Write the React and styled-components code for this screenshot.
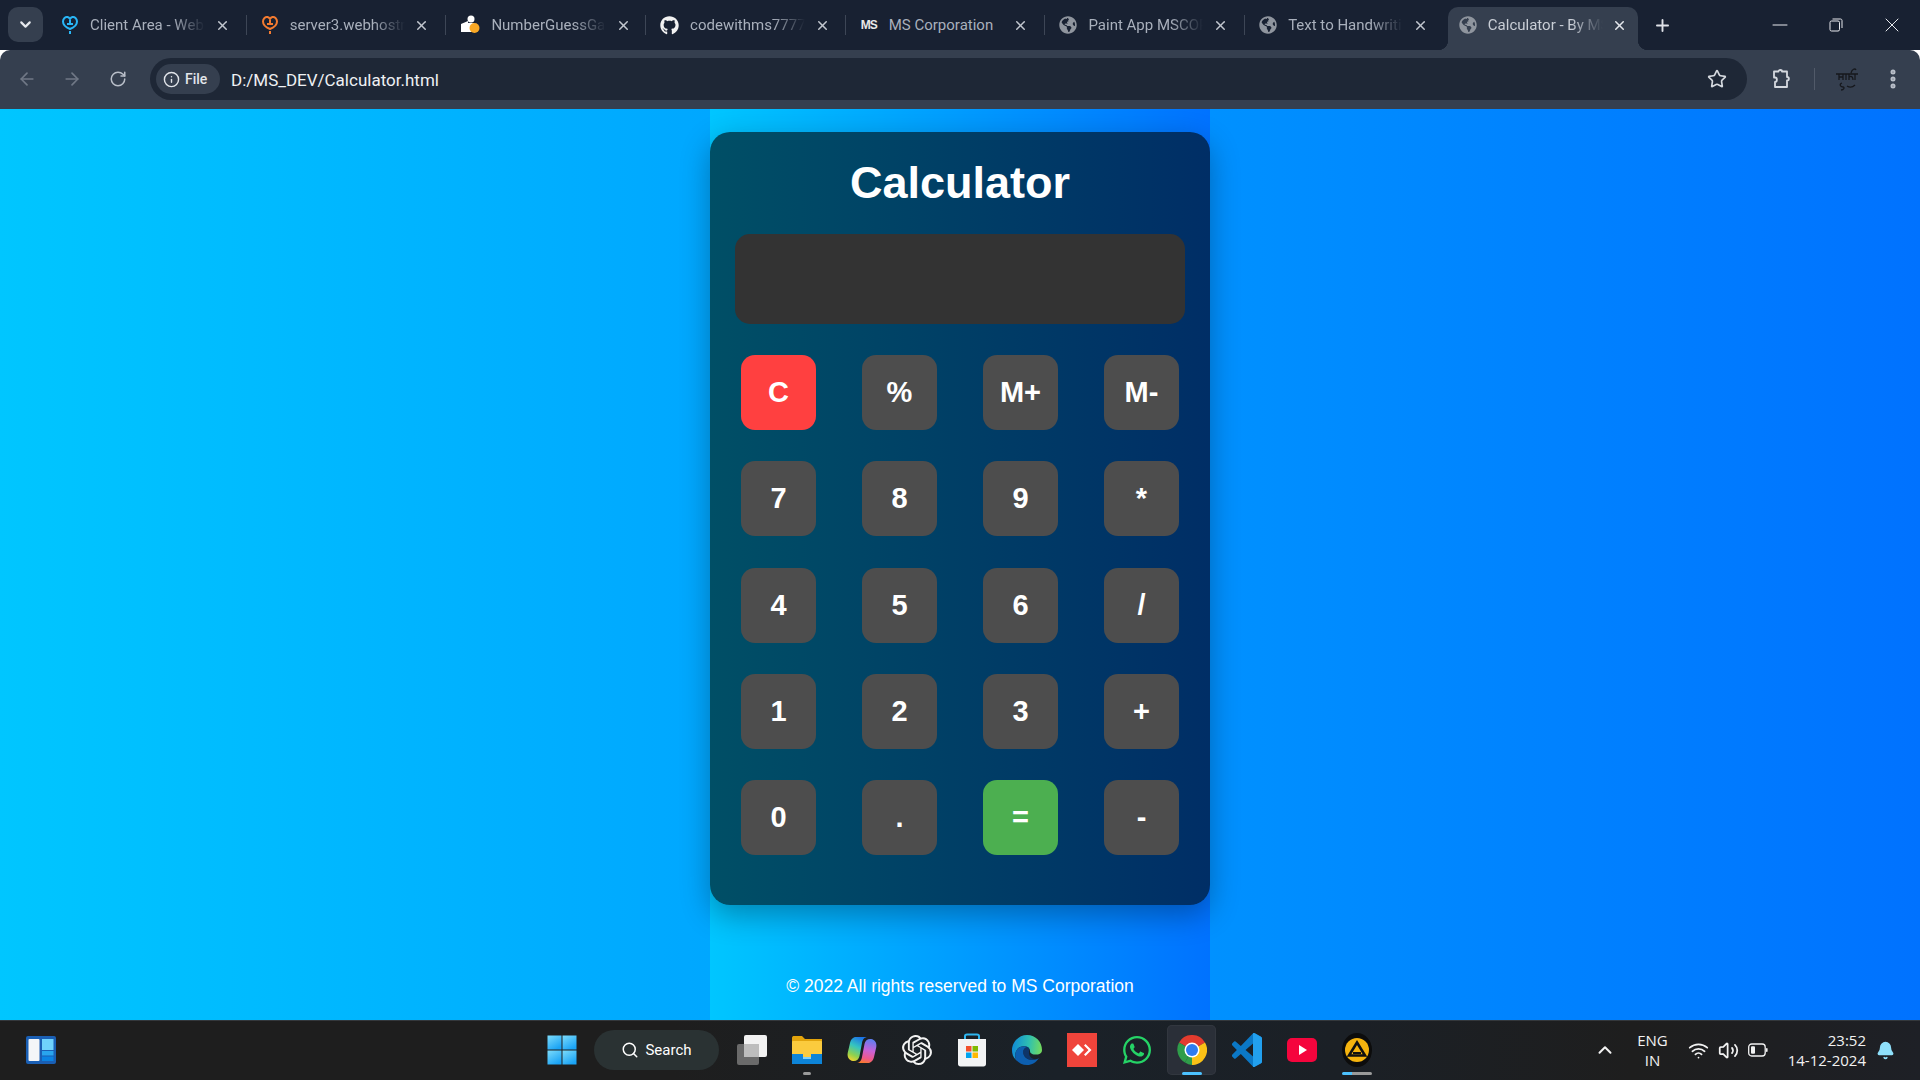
import React from 'react';
import styled, { createGlobalStyle } from 'styled-components';
import {
  ArrowLeft, ArrowRight, RotateCw, Info, Star, X, Plus, Minus, ChevronDown, ChevronUp,
  Wifi, Volume2, Search, MoreVertical, Bell,
} from 'lucide-react';
import { FaGithub, FaGlobeAmericas, FaWhatsapp } from 'react-icons/fa';
import { SiOpenai } from 'react-icons/si';

const GlobalStyle = createGlobalStyle`
  * { box-sizing: border-box; }
  html, body { margin: 0; padding: 0; height: 100%; overflow: hidden; }
  body { font-family: "Liberation Sans", Arial, sans-serif; }
`;

const Screen = styled.div`
  width: 1920px;
  height: 1080px;
  display: flex;
  flex-direction: column;
`;

/* browser chrome */
const TabStrip = styled.div`
  flex: 0 0 50px;
  display: flex;
  align-items: flex-end;
  background: #182132;
  position: relative;
`;

const TabSearch = styled.div`
  flex: 0 0 35px;
  height: 35px;
  margin: 0 5px 8px 8px;
  border-radius: 10px;
  background: #353f4f;
  color: #e6e9ee;
  display: flex;
  align-items: center;
  justify-content: center;
`;

const Tab = styled.div`
  flex: 0 0 199.7px;
  height: 43px;
  padding: 0 0 7px 13px;
  display: flex;
  align-items: center;
  position: relative;
  color: #a9b0bc;

  ${(p) => !p.$last && !p.$active && `
    &::after {
      content: '';
      position: absolute;
      right: 1px;
      top: 8px;
      width: 1px;
      height: 20px;
      background: #3d4656;
    }
  `}
`;

const ActiveTabShape = styled.div`
  position: absolute;
  left: 2px;
  top: 0;
  bottom: 0;
  width: 190px;
  background: #353f4f;
  border-radius: 10px 10px 0 0;

  &::before, &::after {
    content: '';
    position: absolute;
    bottom: 0;
    width: 10px;
    height: 10px;
  }
  &::before {
    left: -10px;
    background: radial-gradient(circle at 0 0, transparent 10px, #353f4f 10.5px);
  }
  &::after {
    right: -10px;
    background: radial-gradient(circle at 100% 0, transparent 10px, #353f4f 10.5px);
  }
`;

const Favicon = styled.span`
  flex: 0 0 18px;
  height: 18px;
  display: flex;
  align-items: center;
  justify-content: center;
  position: relative;
  color: ${(p) => p.$color || '#8f959e'};
`;

const MsMark = styled.span`
  font: 700 12px/18px "Liberation Sans Narrow", "Liberation Sans", sans-serif;
  letter-spacing: -1px;
  color: #e8e8e8;
`;

const TabTitle = styled.span`
  flex: 0 0 115px;
  margin-left: 11px;
  font: 400 15px/20px Roboto, sans-serif;
  white-space: nowrap;
  overflow: hidden;
  position: relative;
  color: ${(p) => (p.$active ? '#c9ced6' : '#a9b0bc')};
  ${(p) => p.$fade && `
    -webkit-mask-image: linear-gradient(90deg, #000 72%, transparent 100%);
    mask-image: linear-gradient(90deg, #000 72%, transparent 100%);
  `}
`;

const TabClose = styled.span`
  flex: 0 0 16px;
  margin-left: 9px;
  display: flex;
  position: relative;
  justify-content: center;
  color: ${(p) => (p.$active ? '#e4e7ec' : '#c2c7cf')};
`;

const NewTab = styled.div`
  margin: 0 0 8px 0;
  width: 34px;
  height: 34px;
  display: flex;
  align-items: center;
  justify-content: center;
  color: #dfe2e8;
`;

const WindowButtons = styled.div`
  margin-left: auto;
  height: 50px;
  display: flex;
  color: #e8eaee;
`;

const WindowButton = styled.div`
  width: 56px;
  height: 50px;
  display: flex;
  align-items: center;
  justify-content: center;
`;

const Toolbar = styled.div`
  flex: 0 0 59px;
  display: flex;
  align-items: flex-start;
  padding-top: 8px;
  background: #353f4f;
  border-radius: 10px 10px 0 0;
`;

const NavButton = styled.div`
  flex: 0 0 ${(p) => p.$w || 45}px;
  height: 42px;
  display: flex;
  align-items: center;
  justify-content: center;
  color: ${(p) => (p.$dim ? '#707886' : '#b9bfc9')};
`;

const AddressBar = styled.div`
  flex: 0 0 1597px;
  height: 42px;
  margin-left: 4px;
  padding: 0 12px 0 6px;
  border-radius: 21px;
  background: #1e2736;
  display: flex;
  align-items: center;
`;

const FileChip = styled.div`
  flex: 0 0 64px;
  height: 30px;
  border-radius: 15px;
  background: #353f4f;
  padding-left: 7px;
  display: flex;
  align-items: center;
  gap: 5px;
  color: #e2e5ea;
  font: 500 14px/30px Roboto, sans-serif;
`;

const UrlText = styled.span`
  margin-left: 11px;
  padding-top: 1px;
  font: 400 17px/20px Roboto, sans-serif;
  color: #eef0f3;
`;

const StarButton = styled.div`
  margin-left: auto;
  margin-right: 8px;
  display: flex;
  color: #d5d9df;
`;

const ToolbarDivider = styled.div`
  flex: 0 0 1px;
  height: 22px;
  margin: 10px 12px 0 -1px;
  background: #515a69;
`;

/* calculator page */
const Page = styled.main`
  flex: 1;
  display: flex;
  justify-content: center;
  background: linear-gradient(to right, #00c6ff, #0072ff);
`;

const Column = styled.div`
  width: 500px;
  padding-top: 23px;
  display: flex;
  flex-direction: column;
  background: linear-gradient(to right, #00c6ff, #0072ff);
`;

const Calculator = styled.section`
  height: 773px;
  padding: 0 25px;
  border-radius: 20px;
  background: linear-gradient(to right, #004f66, #002e66);
  box-shadow: 0 10px 30px rgba(0, 0, 0, 0.3);
`;

const Title = styled.h1`
  margin: 0;
  height: 102px;
  font-size: 45px;
  font-weight: 700;
  line-height: 102px;
  text-align: center;
  color: #fff;
`;

const Display = styled.div`
  height: 90px;
  border-radius: 15px;
  background: #333;
`;

const Keys = styled.div`
  margin-top: 31px;
  padding: 0 6px;
  display: grid;
  grid-template-columns: repeat(4, 75px);
  grid-auto-rows: 75px;
  column-gap: 46px;
  row-gap: 31.25px;
`;

const Key = styled.button`
  border: 0;
  padding: 0;
  border-radius: 14px;
  font: 700 29px "Liberation Sans", Arial, sans-serif;
  color: #fff;
  background: ${(p) => p.$bg || '#4d4d4d'};
`;

const Footer = styled.p`
  margin: 71px 0 0;
  font-size: 17.5px;
  line-height: 21px;
  text-align: center;
  color: #fff;
`;

/* windows taskbar */
const Taskbar = styled.footer`
  flex: 0 0 60px;
  display: flex;
  align-items: center;
  box-shadow: inset 0 1px 0 #34383c;
  background: linear-gradient(90deg, #1e1e1e 0%, #1e1e1e 35%, #1a2128 55%, #1b2026 70%, #1e1e1e 85%, #1e2026 100%);
`;

const WidgetSlot = styled.div`
  flex: 0 0 534.5px;
  padding-left: 26px;
  display: flex;
  align-items: center;
`;

const AppSlot = styled.div`
  flex: 0 0 ${(p) => (p.$active ? 49 : 55)}px;
  height: 50px;
  margin: ${(p) => (p.$active ? '0 3px' : '0')};
  display: flex;
  align-items: center;
  justify-content: center;
  position: relative;
  border-radius: 5px;
  ${(p) => p.$active && `
    background: #2a2f38;
    box-shadow: inset 0 0 0 1px #32373f;
  `}
`;

const RunDot = styled.span`
  position: absolute;
  left: 50%;
  bottom: 0;
  width: ${(p) => p.$w}px;
  height: 3px;
  transform: translateX(-50%);
  border-radius: 2px;
  background: ${(p) => p.$bg};
`;

const SearchPill = styled.div`
  flex: 0 0 125px;
  height: 40px;
  margin: 0 5px 0 4.5px;
  border-radius: 20px;
  background: #2a3233;
  color: #fff;
  display: flex;
  align-items: center;
  justify-content: center;
  gap: 6px;
  font: 400 15px Roboto, sans-serif;
`;

const Tray = styled.div`
  margin-left: auto;
  display: flex;
  align-items: center;
  color: #f2f2f2;
`;

const LangBlock = styled.div`
  margin: 0 20px 0 21px;
  font: 400 15px/20px "Open Sans", sans-serif;
  text-align: center;
`;

const TrayIcons = styled.div`
  display: flex;
  align-items: center;
  gap: 9px;
`;

const Clock = styled.div`
  margin-left: 20px;
  font: 400 15px/20px "Open Sans", sans-serif;
  text-align: right;
`;

const BellWrap = styled.div`
  margin: 0 25px 0 10px;
  display: flex;
  color: #8fe0fb;
`;

const HostMark = ({ color }) => (
  <svg width="18" height="20" viewBox="0 0 18 20" fill="none" stroke={color} strokeWidth="2">
    <path d="M9 14C4 12 2 9.500 2 6.500C2 3.500 4.500 1.500 6.500 2C8 2.400 9 4 9 4C9 4 10 2.400 11.500 2C13.500 1.500 16 3.500 16 6.500C16 9.500 14 12 9 14Z" />
    <path d="M9 5V8M6 9H12M9 16V19" />
  </svg>
);

const GuessMark = () => (
  <svg width="20" height="20" viewBox="0 0 20 20">
    <path d="M1 9L8 6V17H1Z" fill="#fff" />
    <circle cx="11" cy="4" r="3.500" fill="#fff" />
    <rect x="8" y="8" width="6" height="9" fill="#fff" />
    <circle cx="14.500" cy="13" r="5" fill="#f9a825" />
  </svg>
);

const RestoreIcon = () => (
  <svg width="14" height="14" viewBox="0 0 14 14" fill="none" stroke="currentColor" strokeWidth="1">
    <rect x="1" y="3" width="9.500" height="10" rx="1.500" />
    <path d="M3.500 1H11.500C12.400 1 13 1.600 13 2.500V10" />
  </svg>
);

const PuzzleIcon = () => (
  <svg width="20" height="20" viewBox="0 0 20 20" fill="none" stroke="#d5d9df" strokeWidth="1.800" strokeLinejoin="round">
    <path d="M3 2.500H7.500C7.500 0.500 11 0.500 11 2.500H16V8C18.500 8 18.500 11.500 16 11.500V18H4V13C6.500 13 6.500 8.500 4 8.500L3 8.500Z" />
  </svg>
);

const AvatarScribble = () => (
  <svg width="26" height="26" viewBox="0 0 26 26" fill="none" stroke="#16181d" strokeWidth="1.300">
    <path d="M2 8H24M5 8V14M5 11H9M9 8V14M12 8V14M15 8V14M15 11C18 9 19 12 19 14M21 8V14M17 7C18 3 21 2 22 4" />
    <path d="M8 17C5 18 6 21 9 21C11 21 10 24 7 24M13 20C16 22 19 21 21 19" />
  </svg>
);

const WidgetsIcon = () => (
  <svg width="30" height="28" viewBox="0 0 30 28">
    <rect width="30" height="28" rx="2" fill="#1a5fb4" />
    <rect x="2.500" y="3" width="11" height="22" rx="1" fill="#f4f6f8" />
    <rect x="16" y="3" width="11.500" height="11" fill="#6fd2fb" />
    <rect x="16" y="15" width="11.500" height="4.500" fill="#29a5ee" />
    <rect x="16" y="20.500" width="11.500" height="4.500" fill="#0b83e3" />
  </svg>
);

const StartIcon = () => (
  <svg width="30" height="30" viewBox="0 0 30 30">
    <defs>
      <linearGradient id="startFill" x1="0" y1="0" x2="0.6" y2="1">
        <stop offset="0" stopColor="#7ddcfb" />
        <stop offset="1" stopColor="#1aa3f5" />
      </linearGradient>
    </defs>
    <rect x="0.500" y="0.500" width="14" height="14" fill="url(#startFill)" />
    <rect x="15.500" y="0.500" width="14" height="14" fill="url(#startFill)" />
    <rect x="0.500" y="15.500" width="14" height="14" fill="url(#startFill)" />
    <rect x="15.500" y="15.500" width="14" height="14" fill="url(#startFill)" />
  </svg>
);

const TaskViewIcon = () => (
  <svg width="30" height="30" viewBox="0 0 30 30">
    <rect x="0" y="9" width="22" height="21" rx="2" fill="#6a6a6a" />
    <rect x="7" y="0" width="23" height="22" rx="2" fill="#f2f2f2" />
    <rect x="7" y="9" width="15" height="13" fill="#bdbdbd" />
  </svg>
);

const FolderIcon = () => (
  <svg width="32" height="30" viewBox="0 0 32 30">
    <path d="M1 3C1 1.500 2 1 3 1H11L14 4H31V29H1Z" fill="#e2a40c" />
    <rect x="1" y="6" width="30" height="23" rx="1" fill="#fbcb3e" />
    <path d="M1 19H12V22H20V19H31V29H1Z" fill="#0d84d8" />
    <rect x="12" y="22" width="8" height="2" fill="#7fd0f7" />
  </svg>
);

const CopilotIcon = () => (
  <svg width="30" height="30" viewBox="0 0 30 30">
    <defs>
      <linearGradient id="copA" x1="0.6" y1="0" x2="0.2" y2="1">
        <stop offset="0" stopColor="#1c74e8" />
        <stop offset="0.4" stopColor="#35c4c0" />
        <stop offset="0.75" stopColor="#8fd14f" />
        <stop offset="1" stopColor="#f6d32d" />
      </linearGradient>
      <linearGradient id="copB" x1="0.6" y1="0" x2="0.4" y2="1">
        <stop offset="0" stopColor="#5e7ef0" />
        <stop offset="0.45" stopColor="#c762d8" />
        <stop offset="0.8" stopColor="#f0588a" />
        <stop offset="1" stopColor="#f77a2e" />
      </linearGradient>
    </defs>
    <path d="M9 2H21C17.500 2 15.800 4 15 8L12.500 21C12 24.500 9 26.500 6 26C2 25.500 0 22 0.700 18L3 8C3.800 4.500 6 2 9 2Z" fill="url(#copA)" />
    <path d="M21 28H9C12.500 28 14.200 26 15 22L17.500 9C18 5.500 21 3.500 24 4C28 4.500 30 8 29.300 12L27 22C26.200 25.500 24 28 21 28Z" fill="url(#copB)" />
  </svg>
);

const StoreIcon = () => (
  <svg width="30" height="34" viewBox="0 0 30 34">
    <path d="M8 8V3C8 2 9 1.500 10 1.500H20C21 1.500 22 2 22 3V8" fill="none" stroke="#2fb6ef" strokeWidth="2" />
    <path d="M1 6H29V31C29 32.500 28 33.500 26.500 33.500H3.500C2 33.500 1 32.500 1 31Z" fill="#f2f3f4" />
    <rect x="9" y="13" width="5.500" height="5.500" fill="#f2502c" />
    <rect x="15.500" y="13" width="5.500" height="5.500" fill="#7fba00" />
    <rect x="9" y="19.500" width="5.500" height="5.500" fill="#00a4ef" />
    <rect x="15.500" y="19.500" width="5.500" height="5.500" fill="#ffb900" />
  </svg>
);

const EdgeIcon = () => (
  <svg width="30" height="30" viewBox="0 0 30 30">
    <defs>
      <linearGradient id="edgeTop" x1="0" y1="0.4" x2="1" y2="0.5">
        <stop offset="0" stopColor="#0f8ad8" />
        <stop offset="0.55" stopColor="#2fc0b0" />
        <stop offset="1" stopColor="#74db5c" />
      </linearGradient>
    </defs>
    <path d="M15 0C24 0 30 7 30 15C30 17 29 19 26 19.500C22 20 18 19 18 16C18 12 13 10 8 12C4 14 2 19 4 25C1 22 0 19 0 15C0 7 7 0 15 0Z" fill="url(#edgeTop)" />
    <path d="M4 25C2 19 4 14 8 12C11 10.800 14 11 16 12C12 12.500 10.500 15.500 11.500 19C13 24.500 20 27 27 23C24 27.500 20 30 15 30C10.500 30 7 28 4 25Z" fill="#0d5fb0" />
    <path d="M16 12C12 12.500 10.500 15.500 11.500 19C13 24 19 26 24 24.500C20 24 17 21.500 17 18C17 15 18 13.500 16 12Z" fill="#0a3f86" opacity="0.7" />
  </svg>
);

const AnyDeskIcon = () => (
  <svg width="30" height="34" viewBox="0 0 30 34">
    <rect width="30" height="34" fill="#ef443b" />
    <path d="M11 11L17 17L11 23L5 17Z" fill="#fff" />
    <path d="M18.500 11L24.500 17L18.500 23L17 21.500L21.500 17L17 12.500Z" fill="#fff" />
  </svg>
);

const ChromeIcon = () => (
  <svg width="30" height="30" viewBox="0 0 30 30">
    <path d="M15 15L2 7.500A15 15 0 0 1 28 7.500Z" fill="#e33b2e" />
    <path d="M15 15H28A15 15 0 0 1 15 30Z" fill="#fbc116" />
    <path d="M28 7.500A15 15 0 0 1 15 30L15 15Z" fill="#fbc116" />
    <path d="M2 7.500L15 15L8 27.500A15 15 0 0 1 2 7.500Z" fill="#2f9d4a" />
    <path d="M8 27.500L15 15L15 30A15 15 0 0 1 8 27.500Z" fill="#2f9d4a" />
    <circle cx="15" cy="15" r="7.500" fill="#fff" />
    <circle cx="15" cy="15" r="6" fill="#2f7bf0" />
  </svg>
);

const VsCodeIcon = () => (
  <svg width="30" height="34" viewBox="0 0 24 24" preserveAspectRatio="none">
    <defs>
      <clipPath id="vsRight"><rect x="16.700" y="0" width="8" height="24" /></clipPath>
    </defs>
    <path fill="#0b78c6" d="M23.150 2.587L18.210.21a1.494 1.494 0 0 0-1.705.29l-9.460 8.630-4.120-3.128a.999.999 0 0 0-1.276.057L.327 7.261A1 1 0 0 0 .326 8.740L3.899 12 .326 15.260a1 1 0 0 0 .001 1.479L1.650 17.940a.999.999 0 0 0 1.276.057l4.120-3.128 9.460 8.630a1.492 1.492 0 0 0 1.704.290l4.942-2.377A1.500 1.500 0 0 0 24 20.060V3.939a1.500 1.500 0 0 0-.850-1.352zm-5.146 14.861L10.826 12l7.178-5.448v10.896z" />
    <path clipPath="url(#vsRight)" fill="#22a0ee" d="M23.150 2.587L18.210.21a1.494 1.494 0 0 0-1.705.29L16.700 24a1.492 1.492 0 0 0 1.704-.290l4.942-2.377A1.500 1.500 0 0 0 24 20.060V3.939a1.500 1.500 0 0 0-.850-1.352z" />
  </svg>
);

const YoutubeIcon = () => (
  <svg width="30" height="24" viewBox="0 0 30 24">
    <rect width="30" height="24" rx="5" fill="#f5053d" />
    <path d="M12 7L20 12L12 17Z" fill="#fff" />
  </svg>
);

const AimpIcon = () => (
  <svg width="30" height="34" viewBox="0 0 30 34">
    <ellipse cx="15" cy="17" rx="15" ry="17" fill="#0c0c0c" />
    <circle cx="15" cy="17" r="12" fill="#f6b40e" />
    <path d="M15 9.500L23 22.500H7Z" fill="none" stroke="#111" strokeWidth="2.600" />
    <path d="M11 20H19" stroke="#111" strokeWidth="2" />
  </svg>
);

const BatteryIcon = () => (
  <svg width="20" height="14" viewBox="0 0 20 14" fill="none">
    <rect x="0.700" y="1" width="16.500" height="12" rx="3" stroke="#f2f2f2" strokeWidth="1.300" />
    <rect x="3" y="3.300" width="4" height="7.400" rx="1" fill="#f2f2f2" />
    <rect x="18" y="5" width="1.600" height="4" rx="0.800" fill="#f2f2f2" />
  </svg>
);

const tabs = [
  { title: 'Client Area - Web Hosting', icon: <HostMark color="#29b6f6" />, fade: true },
  { title: 'server3.webhostmost', icon: <HostMark color="#f47b30" />, fade: true },
  { title: 'NumberGuessGame', icon: <GuessMark />, fade: true },
  { title: 'codewithms7777', icon: <FaGithub size={19} color="#f2f2f2" />, fade: true },
  { title: 'MS Corporation', icon: <MsMark>MS</MsMark> },
  { title: 'Paint App MSCORP', icon: <FaGlobeAmericas size={18} />, fade: true },
  { title: 'Text to Handwriting', icon: <FaGlobeAmericas size={18} />, fade: true },
  { title: 'Calculator - By MS Corp', icon: <FaGlobeAmericas size={18} />, fade: true, active: true },
];

const keys = [
  { label: 'C', bg: '#ff4040' }, { label: '%' }, { label: 'M+' }, { label: 'M-' },
  { label: '7' }, { label: '8' }, { label: '9' }, { label: '*' },
  { label: '4' }, { label: '5' }, { label: '6' }, { label: '/' },
  { label: '1' }, { label: '2' }, { label: '3' }, { label: '+' },
  { label: '0' }, { label: '.' }, { label: '=', bg: '#4caf50' }, { label: '-' },
];

function WindowControls() {
  return (
    <WindowButtons>
      <WindowButton><Minus size={24} strokeWidth={1} /></WindowButton>
      <WindowButton><RestoreIcon /></WindowButton>
      <WindowButton><X size={24} strokeWidth={1} /></WindowButton>
    </WindowButtons>
  );
}

export default function App() {
  return (
    <Screen>
      <GlobalStyle />

      <TabStrip>
        <TabSearch><ChevronDown size={17} strokeWidth={3} /></TabSearch>
        {tabs.map((t, i) => (
          <Tab key={t.title} $active={t.active} $last={i === tabs.length - 2}>
            {t.active && <ActiveTabShape />}
            <Favicon>{t.icon}</Favicon>
            <TabTitle $fade={t.fade} $active={t.active}>{t.title}</TabTitle>
            <TabClose $active={t.active}><X size={15} strokeWidth={2.4} /></TabClose>
          </Tab>
        ))}
        <NewTab><Plus size={19} strokeWidth={2.4} /></NewTab>
        <WindowControls />
      </TabStrip>

      <Toolbar>
        <NavButton $dim $w={54}><ArrowLeft size={20} /></NavButton>
        <NavButton $dim $w={36}><ArrowRight size={20} /></NavButton>
        <NavButton $w={56}><RotateCw size={18} /></NavButton>
        <AddressBar>
          <FileChip><Info size={17} />File</FileChip>
          <UrlText>D:/MS_DEV/Calculator.html</UrlText>
          <StarButton><Star size={20} /></StarButton>
        </AddressBar>
        <NavButton $w={68}><PuzzleIcon /></NavButton>
        <ToolbarDivider />
        <NavButton $w={40}><AvatarScribble /></NavButton>
        <NavButton $w={51}><MoreVertical size={24} strokeWidth={3} /></NavButton>
      </Toolbar>

      <Page>
        <Column>
          <Calculator>
            <Title>Calculator</Title>
            <Display />
            <Keys>
              {keys.map((k) => (
                <Key key={k.label} $bg={k.bg}>{k.label}</Key>
              ))}
            </Keys>
          </Calculator>
          <Footer>© 2022 All rights reserved to MS Corporation</Footer>
        </Column>
      </Page>

      <Taskbar>
        <WidgetSlot><WidgetsIcon /></WidgetSlot>
        <AppSlot><StartIcon /></AppSlot>
        <SearchPill><Search size={18} />Search</SearchPill>
        <AppSlot><TaskViewIcon /></AppSlot>
        <AppSlot><FolderIcon /><RunDot $w={8} $bg="#9a9a9a" /></AppSlot>
        <AppSlot><CopilotIcon /></AppSlot>
        <AppSlot><SiOpenai size={30} color="#f2f2f2" /></AppSlot>
        <AppSlot><StoreIcon /></AppSlot>
        <AppSlot><EdgeIcon /></AppSlot>
        <AppSlot><AnyDeskIcon /></AppSlot>
        <AppSlot><FaWhatsapp size={32} color="#25d366" /></AppSlot>
        <AppSlot $active><ChromeIcon /><RunDot $w={20} $bg="#4cc2ff" /></AppSlot>
        <AppSlot><VsCodeIcon /></AppSlot>
        <AppSlot><YoutubeIcon /></AppSlot>
        <AppSlot><AimpIcon /><RunDot $w={30} $bg="linear-gradient(90deg, #4cc2ff 33%, #9a9a9a 33%)" /></AppSlot>
        <Tray>
          <ChevronUp size={22} strokeWidth={2.2} />
          <LangBlock>ENG<br />IN</LangBlock>
          <TrayIcons>
            <Wifi size={21} />
            <Volume2 size={21} />
            <BatteryIcon />
          </TrayIcons>
          <Clock>23:52<br />14-12-2024</Clock>
          <BellWrap><Bell size={19} fill="currentColor" /></BellWrap>
        </Tray>
      </Taskbar>
    </Screen>
  );
}
